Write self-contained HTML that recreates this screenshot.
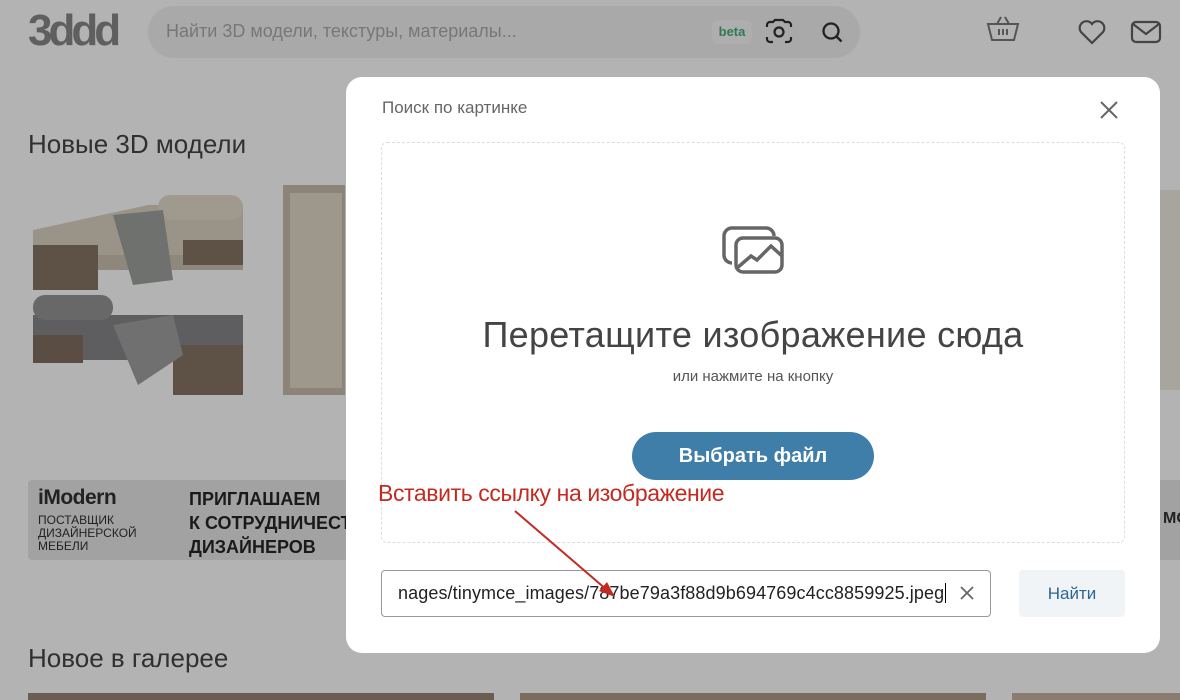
<!DOCTYPE html>
<html><head><meta charset="utf-8"><style>
*{box-sizing:border-box;margin:0;padding:0}
body{width:1180px;height:700px;overflow:hidden;background:#b3b3b3;font-family:"Liberation Sans",sans-serif;position:relative}
.abs{position:absolute}
</style></head><body>
<div class="abs" style="left:28px;top:6px;font:bold 44px 'Liberation Sans';color:#5f5f5f;letter-spacing:-4px">3ddd</div>
<div class="abs" style="left:148px;top:6px;width:712px;height:52px;border-radius:26px;background:#a9a9a9"></div>
<div class="abs" style="left:166px;top:21px;font-size:18px;color:#777">Найти 3D модели, текстуры, материалы...</div>
<div class="abs" style="left:712px;top:20px;width:40px;height:24px;border-radius:6px;background:#aeaeae;color:#2f7a55;font-weight:bold;font-size:13px;text-align:center;line-height:24px">beta</div>
<svg class="abs" style="left:764px;top:18px" width="30" height="28" viewBox="0 0 30 28" fill="none" stroke="#222" stroke-width="2.2"><path d="M3 9V7a3 3 0 0 1 3-3h3l2-2h8l2 2h3a3 3 0 0 1 3 3v2M3 19v2a3 3 0 0 0 3 3h3M27 19v2a3 3 0 0 1-3 3h-3"/><circle cx="15" cy="14" r="4.5"/></svg>
<svg class="abs" style="left:820px;top:20px" width="26" height="26" viewBox="0 0 26 26" fill="none" stroke="#222" stroke-width="2.3"><circle cx="11" cy="11" r="7.5"/><path d="M16.5 16.5l5 5"/></svg>
<svg class="abs" style="left:986px;top:14px" width="34" height="30" viewBox="0 0 34 30" fill="none" stroke="#555" stroke-width="2"><path d="M11 10l4-7M23 10l-4-7M2 10h30l-4 16H6z"/><path d="M13 15v6M17 15v6M21 15v6"/></svg>
<svg class="abs" style="left:1077px;top:18px" width="30" height="28" viewBox="0 0 30 28" fill="none" stroke="#444" stroke-width="2.2"><path d="M15 25L4 14a6.5 6.5 0 0 1 11-8 6.5 6.5 0 0 1 11 8z"/></svg>
<svg class="abs" style="left:1130px;top:19px" width="32" height="26" viewBox="0 0 32 26" fill="none" stroke="#444" stroke-width="2.2"><rect x="2" y="3" width="28" height="20" rx="4"/><path d="M3 5l13 10 13-10"/></svg>

<div class="abs" style="left:28px;top:129px;font-size:26px;color:#303030">Новые 3D модели</div>
<svg class="abs" style="left:28px;top:185px" width="320" height="212" viewBox="0 0 320 212">
<rect x="5" y="45" width="210" height="40" fill="#8e887c"/><path d="M5 45L120 20h95v50H5z" fill="#9a9488"/><rect x="130" y="10" width="85" height="25" rx="12" fill="#a09a8e"/>
<rect x="5" y="60" width="65" height="45" fill="#5e5146"/><rect x="155" y="55" width="60" height="25" fill="#5e5146"/>
<path d="M85 30l50-5 10 70-40 5z" fill="#6f716f"/>
<rect x="5" y="130" width="210" height="45" fill="#5e5e60"/><rect x="5" y="110" width="80" height="25" rx="12" fill="#686868"/>
<rect x="5" y="150" width="50" height="28" fill="#5a4d43"/><rect x="145" y="160" width="70" height="50" fill="#5e5146"/>
<path d="M85 140l60-10 10 40-45 30z" fill="#707070"/>
<rect x="255" y="0" width="62" height="210" fill="#8c8478"/><rect x="262" y="8" width="52" height="195" fill="#9e978b"/>
</svg>
<div class="abs" style="left:28px;top:480px;width:320px;height:80px;background:#a2a2a2;border-radius:4px"></div>
<div class="abs" style="left:38px;top:486px;font:bold 21px 'Liberation Sans';color:#222;letter-spacing:-0.5px">iModern</div>
<div class="abs" style="left:38px;top:514px;font-size:12px;line-height:13px;color:#222">ПОСТАВЩИК<br>ДИЗАЙНЕРСКОЙ<br>МЕБЕЛИ</div>
<div class="abs" style="left:189px;top:487px;font:bold 18px 'Liberation Sans';line-height:24px;color:#1a1a1a;white-space:nowrap;width:157px;overflow:hidden">ПРИГЛАШАЕМ<br>К СОТРУДНИЧЕСТВУ<br>ДИЗАЙНЕРОВ</div>
<div class="abs" style="left:1160px;top:480px;width:20px;height:80px;background:#a2a2a2"></div>
<div class="abs" style="left:1163px;top:510px;font:bold 16px 'Liberation Sans';color:#222">МО</div>
<div class="abs" style="left:1160px;top:190px;width:20px;height:200px;background:#a8a49e"></div>
<div class="abs" style="left:28px;top:643px;font-size:26px;color:#303030">Новое в галерее</div>
<div class="abs" style="left:28px;top:693px;width:466px;height:7px;background:#6a5e52"></div>
<div class="abs" style="left:520px;top:693px;width:466px;height:7px;background:#7a6c5e"></div>
<div class="abs" style="left:1012px;top:693px;width:168px;height:7px;background:#8a7c6e"></div>

<div class="abs" style="left:346px;top:77px;width:814px;height:576px;background:#fff;border-radius:16px"></div>
<div class="abs" style="left:382px;top:98px;font-size:17px;color:#666">Поиск по картинке</div>
<svg class="abs" style="left:1099px;top:100px" width="20" height="20" viewBox="0 0 20 20" stroke="#666" stroke-width="2"><path d="M2 2l16 16M18 2L2 18"/></svg>
<div class="abs" style="left:381px;top:142px;width:744px;height:401px;border:1px dashed #ddd;border-radius:6px"></div>
<svg class="abs" style="left:722px;top:226px" width="62" height="50" viewBox="0 0 62 50" fill="none" stroke="#666" stroke-width="3.5"><path d="M10 37a8 8 0 0 1-8-8V10a8 8 0 0 1 8-8h34a8 8 0 0 1 8 8"/><rect x="14" y="12" width="46" height="34" rx="7"/><path d="M15 42l14-12 6 4 14-14 11 10"/></svg>
<div class="abs" style="left:381px;top:314px;width:744px;text-align:center;font-size:36px;color:#444;letter-spacing:0.3px">Перетащите изображение сюда</div>
<div class="abs" style="left:381px;top:368px;width:744px;text-align:center;font-size:15px;color:#555">или нажмите на кнопку</div>
<div class="abs" style="left:632px;top:432px;width:242px;height:48px;border-radius:24px;background:#3f7ea8;color:#fff;font-size:20px;font-weight:bold;text-align:center;line-height:48px">Выбрать файл</div>
<div class="abs" style="left:378px;top:480px;font-size:23px;color:#c42a20;letter-spacing:-0.4px">Вставить ссылку на изображение</div>
<div class="abs" style="left:381px;top:570px;width:610px;height:47px;border:1px solid #999;border-radius:4px"></div>
<div class="abs" style="left:398px;top:583px;font-size:18px;color:#222;white-space:nowrap;letter-spacing:0.1px">nages/tinymce_images/787be79a3f88d9b694769c4cc8859925.jpeg<span style="border-left:1px solid #000;margin-left:1px"></span></div>
<svg class="abs" style="left:960px;top:586px" width="14" height="14" viewBox="0 0 14 14" stroke="#666" stroke-width="1.8"><path d="M1 1l12 12M13 1L1 13"/></svg>
<div class="abs" style="left:1019px;top:570px;width:106px;height:47px;background:#f0f4f7;border-radius:4px;color:#2e6690;font-size:17px;text-align:center;line-height:47px">Найти</div>
<svg class="abs" style="left:0;top:0" width="1180" height="700"><path d="M515 511L607 590" stroke="#c42a20" stroke-width="2"/><path d="M615 597l-16-6 8-9z" fill="#c42a20"/></svg>
</body></html>
